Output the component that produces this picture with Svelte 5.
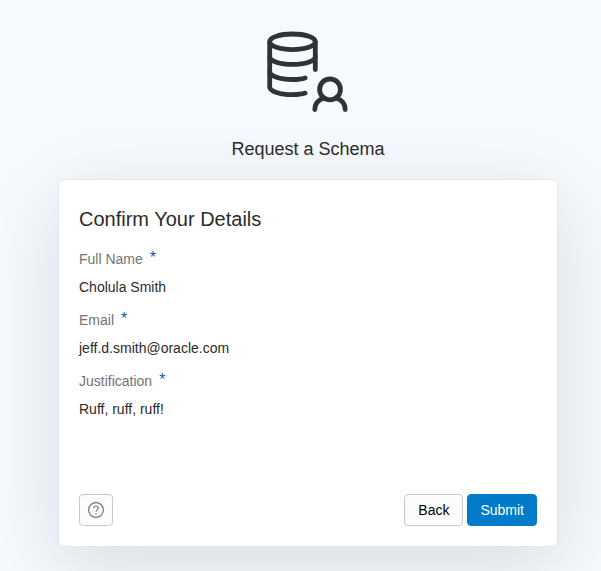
<script lang="ts">
    const fields = [
        { label: "Full Name", value: "Cholula Smith" },
        { label: "Email", value: "jeff.d.smith@oracle.com" },
        { label: "Justification", value: "Ruff, ruff, ruff!" }
    ];
</script>

<main>
    <header>
        <svg class="logo" viewBox="16 11 84 82" aria-hidden="true">
            <ellipse cx="42.5" cy="21.8" rx="22.8" ry="7.8" />
            <path d="M19.7 21.8V67c0 4.3 10.2 7.7 22.8 7.7 5.2 0 9.8-.6 12.6-1.6" />
            <path d="M65.3 21.8V49.500" />
            <path d="M19.7 36.7c0 4.3 10.2 7.7 22.8 7.7s22.8-3.4 22.8-7.7" />
            <path d="M19.7 51.8c0 4.300 10.200 7.700 22.800 7.700 5.200 0 9.800-.6 12.600-1.600" />
            <circle cx="80" cy="69.4" r="10.4" />
            <path d="M64.8 89.5c0-5.400 3.200-9.500 8.400-11.300M95.200 89.500c0-5.400-3.200-9.500-8.400-11.300" />
        </svg>
        <h1>Request a Schema</h1>
    </header>

    <section class="card">
        <h2>Confirm Your Details</h2>
        <dl>
            {#each fields as field}
                <dt>{field.label}<span class="required">*</span></dt>
                <dd>{field.value}</dd>
            {/each}
        </dl>
        <div class="actions">
            <button type="button" class="help" aria-label="Help">
                <svg viewBox="0 0 16 16" aria-hidden="true">
                    <circle cx="8" cy="8" r="7.4" />
                    <path d="M5.7 6.2C5.7 4.8 6.7 4 8 4s2.3.8 2.3 2.1c0 1.7-2.3 1.9-2.3 3.7" />
                    <path d="M8 11.2v1.2" />
                </svg>
            </button>
            <button type="button" class="back">Back</button>
            <button type="submit" class="submit">Submit</button>
        </div>
    </section>
</main>

<style>
    :global(body) {
        margin: 0;
        background: #f6faff;
        overflow-x: hidden;
    }
    main {
        box-sizing: border-box;
        padding: 31px 0 24px 15px;
        font-family: "Liberation Sans", Arial, sans-serif;
        font-size: 14px;
        color: #2b2b2b;
    }
    header {
        display: flex;
        flex-direction: column;
        align-items: center;
        gap: 24px;
    }
    .logo {
        width: 84px;
        height: 82px;
        fill: none;
        stroke: #303335;
        stroke-width: 4.8;
        stroke-linecap: round;
        stroke-linejoin: round;
    }
    h1, h2 {
        margin: 0;
        font-weight: normal;
    }
    h1 {
        font-size: 18px;
        line-height: 24px;
    }
    h2 {
        font-size: 20px;
        line-height: 24px;
    }
    .card {
        box-sizing: border-box;
        max-width: 500px;
        margin: 18px auto 0;
        padding: 27px 20px 20px;
        background: #fff;
        border: 1px solid #dfe8f0;
        border-radius: 6px;
        box-shadow: 0 20px 80px rgba(0, 0, 0, 0.12);
    }
    dl {
        margin: 12px 0 73px;
    }
    dt {
        line-height: 32px;
        color: #707478;
    }
    dd {
        margin: 0 0 5px;
        line-height: 24px;
    }
    .required {
        margin-left: 7px;
        font-size: 16px;
        line-height: 16px;
        vertical-align: 1px;
        color: #145c9e;
    }
    .actions {
        display: flex;
        gap: 4px;
    }
    button {
        box-sizing: border-box;
        height: 32px;
        padding: 0 12px;
        font: inherit;
        color: #000;
        background: #fcfcfc;
        border: 1px solid #c8c8c8;
        border-radius: 4px;
        cursor: pointer;
    }
    .back {
        padding: 0 13px;
    }
    .help {
        display: flex;
        align-items: center;
        justify-content: center;
        width: 34px;
        margin-right: auto;
        padding: 0;
    }
    .help svg {
        width: 16px;
        height: 16px;
        fill: none;
        stroke: #74787c;
        stroke-width: 1.2;
    }
    .submit {
        color: #fff;
        background: #007bc9;
        border-color: #007bc9;
    }
</style>
